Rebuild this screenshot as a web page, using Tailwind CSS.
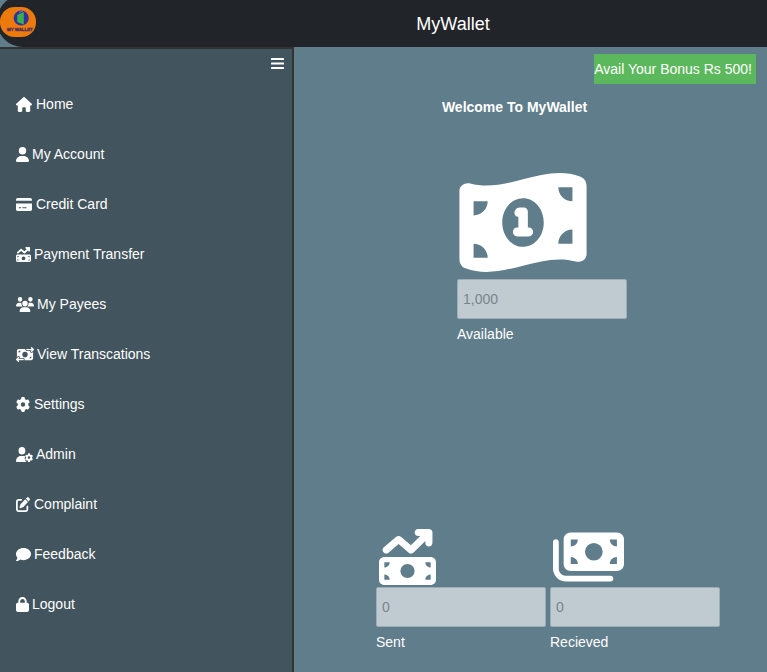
<!DOCTYPE html>
<html lang="en">
<head>
<meta charset="utf-8">
<meta name="viewport" content="width=device-width, initial-scale=1">
<title>MyWallet</title>
<script src="https://cdn.jsdelivr.net/npm/@tailwindcss/browser@4"></script>
</head>
<body class="flex min-h-screen flex-col overflow-x-hidden bg-[#607d8b] font-['Liberation_Sans',Arial,sans-serif] text-sm text-white">
<header class="-mt-[5px] -ml-[3px] flex h-[52px] shrink-0 items-center rounded-l-[26px] bg-[#212529] pl-[3px]">
  <a href="#" aria-label="MyWallet home" class="mt-[2px]">
    <svg class="block h-[30px] w-9" viewBox="0 0 36 30">
      <rect width="36" height="30" rx="14.500" fill="#ec7a0c"/>
      <circle cx="21.2" cy="11" r="7.600" fill="#30359a"/>
      <path d="M17.300 8 23.800 5v12.500l-6.500-2.500z" fill="#3dae50"/>
      <path d="M19 5.500l4-1.500" stroke="#7d86d8" stroke-width=".8"/>
      <text x="7" y="24" font-family="Liberation Sans, sans-serif" font-size="4.400" font-weight="bold" fill="#4a2a60" stroke="#4a2a60" stroke-width=".3">MY WALLET</text>
    </svg>
  </a>
  <h1 class="mt-[5px] flex-1 pl-[103px] text-center text-lg">MyWallet</h1>
</header>
<div class="flex flex-1">
  <aside class="w-[294px] shrink-0 border-t-2 border-r-2 border-[#333] bg-[#42545d]">
    <div class="flex h-[30px] justify-end pt-[8px] pr-[8px]">
      <button type="button" aria-label="Toggle menu" class="h-[14px] w-[13px]">
        <svg class="block h-[14px] w-[13px]" viewBox="0 0 13 14" fill="#fff"><rect y="1" width="13" height="2" rx=".5"/><rect y="5.500" width="13" height="2" rx=".5"/><rect y="10" width="13" height="2" rx=".5"/></svg>
      </button>
    </div>
    <nav>
      <ul>
        <li><a href="#" class="flex h-[50px] items-center gap-1 pl-4"><svg class="h-[15px] w-[16px]" preserveAspectRatio="none" viewBox="0 0 576 512" fill="currentColor"><path d="M575.800 255.500c0 18-15 32.100-32 32.100h-32l.7 160.200c0 2.700-.2 5.400-.5 8.100V472c0 22.100-17.900 40-40 40H392c-22.100 0-40-17.900-40-40V384c0-17.700-14.300-32-32-32H256c-17.700 0-32 14.300-32 32v88c0 22.100-17.900 40-40 40H104c-22.100 0-40-17.900-40-40V287.600H32c-18 0-32-14-32-32.100c0-9 3-17 10-24L266.400 8c7-7 15-8 22-8s15 2 21 7L564.800 231.500c8 7 12 15 11 24z"/></svg>Home</a></li>
        <li><a href="#" class="flex h-[50px] items-center gap-[3px] pl-4"><svg class="h-[15px] w-[13px]" viewBox="0 0 448 512" fill="currentColor"><path d="M224 256A128 128 0 1 0 224 0a128 128 0 1 0 0 256zm-45.700 48C79.800 304 0 383.800 0 482.300C0 498.700 13.300 512 29.700 512H418.300c16.400 0 29.700-13.300 29.700-29.700C448 383.800 368.200 304 269.700 304H178.300z"/></svg>My Account</a></li>
        <li><a href="#" class="flex h-[50px] items-center gap-1 pl-4"><svg class="h-[15px] w-[16px]" preserveAspectRatio="none" viewBox="0 0 576 512" fill="currentColor"><path d="M64 32C28.700 32 0 60.700 0 96v32H576V96c0-35.300-28.700-64-64-64H64zM576 224H0V416c0 35.300 28.700 64 64 64H512c35.300 0 64-28.700 64-64V224zM112 352h64c8.800 0 16 7.200 16 16s-7.200 16-16 16H112c-8.800 0-16-7.200-16-16s7.200-16 16-16zm112 16c0-8.800 7.200-16 16-16H368c8.800 0 16 7.200 16 16s-7.200 16-16 16H240c-8.800 0-16-7.200-16-16z"/></svg>Credit Card</a></li>
        <li><a href="#" class="flex h-[50px] items-center gap-[3px] pl-4"><svg class="h-[15px] w-[15px]" viewBox="0 0 512 512" fill="currentColor"><path id="trend" d="M470.700 9.400c3 3.100 5.300 6.600 6.900 10.300s2.400 7.800 2.400 12.200v96c0 17.700-14.300 32-32 32s-32-14.300-32-32V109.300L310.600 214.600c-11.800 11.800-30.800 12.600-43.500 1.700L176 138.100 84.800 216.300c-13.400 11.500-33.600 9.900-45.100-3.500s-9.900-33.600 3.500-45.100l112-96c12-10.300 29.700-10.300 41.700 0l89.500 76.700L370.700 64H352c-17.700 0-32-14.300-32-32s14.300-32 32-32h96c8.800 0 16.800 3.600 22.600 9.300zM0 304c0-26.500 21.500-48 48-48H464c26.500 0 48 21.500 48 48V464c0 26.500-21.500 48-48 48H48c-26.500 0-48-21.500-48-48V304zM48 416v48H96c0-26.500-21.500-48-48-48zM96 304H48v48c26.500 0 48-21.500 48-48zM464 416c-26.500 0-48 21.500-48 48h48V416zM416 304c0 26.500 21.500 48 48 48V304H416zm-96 80a64 64 0 1 0 -128 0 64 64 0 1 0 128 0z"/></svg>Payment Transfer</a></li>
        <li><a href="#" class="flex h-[50px] items-center gap-[3px] pl-4"><svg class="h-[15px] w-[18px]" preserveAspectRatio="none" viewBox="0 0 640 512" fill="currentColor"><path d="M144 0a80 80 0 1 1 0 160A80 80 0 1 1 144 0zM512 0a80 80 0 1 1 0 160A80 80 0 1 1 512 0zM0 298.700C0 239.800 47.800 192 106.700 192h42.700c15.900 0 31 3.500 44.600 9.700c-1.300 7.200-1.900 14.700-1.900 22.300c0 38.200 16.800 72.500 43.300 96H21.300C9.600 320 0 310.400 0 298.700zM405.300 320c26.600-23.500 42.600-57.800 42.600-96c0-7.600-.7-15-1.900-22.300c13.600-6.300 28.700-9.700 44.600-9.700h42.700C592.200 192 640 239.800 640 298.700c0 11.800-9.600 21.300-21.300 21.300H405.300zM224 224a96 96 0 1 1 192 0 96 96 0 1 1 -192 0zM128 485.300C128 411.700 187.700 352 261.300 352H378.700C452.300 352 512 411.700 512 485.300c0 14.700-11.900 26.700-26.700 26.700H154.700c-14.700 0-26.700-11.900-26.700-26.700z"/></svg>My Payees</a></li>
        <li><a href="#" class="flex h-[50px] items-center gap-[3px] pl-4"><svg class="h-[15px] w-[18px]" preserveAspectRatio="none" viewBox="0 0 640 512" fill="currentColor"><path d="M535 41c-9.400-9.400-9.400-24.600 0-33.900s24.600-9.400 33.900 0l64 64c4.500 4.500 7 10.600 7 17s-2.500 12.500-7 17l-64 64c-9.400 9.400-24.600 9.400-33.900 0s-9.400-24.600 0-33.900l23-23L384 112c-13.300 0-24-10.700-24-24s10.700-24 24-24l174.100 0L535 41zM105 377l-23 23L256 400c13.300 0 24 10.700 24 24s-10.700 24-24 24L81.900 448l23 23c9.400 9.400 9.400 24.600 0 33.900s-24.600 9.400-33.900 0L7 441c-4.500-4.500-7-10.600-7-17s2.500-12.500 7-17l64-64c9.400-9.400 24.600-9.400 33.900 0s9.400 24.600 0 33.900zM96 64H337.900c-3.700 7.200-5.900 15.300-5.900 24c0 28.700 23.300 52 52 52l117.400 0c-4 17 .6 35.500 13.800 48.800c20.300 20.300 53.200 20.300 73.500 0L608 169.500V384c0 35.300-28.700 64-64 64H302.100c3.700-7.200 5.900-15.300 5.900-24c0-28.700-23.300-52-52-52l-117.400 0c4-17-.6-35.500-13.800-48.800c-20.300-20.300-53.200-20.300-73.500 0L32 342.500V128c0-35.300 28.700-64 64-64zm64 64H96v64c35.300 0 64-28.700 64-64zM544 320c-35.300 0-64 28.700-64 64h64V320zM320 352a96 96 0 1 0 0-192 96 96 0 1 0 0 192z"/></svg>View Transcations</a></li>
        <li><a href="#" class="flex h-[50px] items-center gap-1 pl-4"><svg class="h-[15px] w-[14px]" preserveAspectRatio="none" viewBox="0 0 512 512" fill="currentColor"><path id="gear" d="M495.900 166.600c3.200 8.700 .5 18.400-6.400 24.600l-43.300 39.400c1.100 8.300 1.700 16.800 1.700 25.400s-.6 17.100-1.700 25.400l43.300 39.400c6.900 6.200 9.600 15.900 6.400 24.600c-4.400 11.900-9.700 23.300-15.800 34.300l-4.700 8.100c-6.600 11-14 21.400-22.100 31.200c-5.900 7.200-15.700 9.600-24.500 6.800l-55.700-17.700c-13.400 10.300-28.200 18.900-44 25.400l-12.500 57.100c-2 9.100-9 16.300-18.200 17.800c-13.800 2.300-28 3.500-42.500 3.500s-28.700-1.200-42.500-3.500c-9.200-1.500-16.200-8.700-18.200-17.800l-12.500-57.100c-15.800-6.500-30.600-15.100-44-25.400L83.100 425.900c-8.800 2.800-18.600 .3-24.500-6.800c-8.100-9.800-15.500-20.200-22.100-31.200l-4.700-8.100c-6.100-11-11.400-22.400-15.800-34.300c-3.200-8.700-.5-18.400 6.400-24.600l43.300-39.400C64.600 273.100 64 264.600 64 256s.6-17.100 1.700-25.400L22.400 191.200c-6.900-6.200-9.600-15.900-6.400-24.600c4.400-11.900 9.700-23.300 15.800-34.300l4.700-8.100c6.600-11 14-21.400 22.100-31.200c5.900-7.200 15.700-9.600 24.500-6.800l55.700 17.700c13.400-10.300 28.200-18.900 44-25.400l12.500-57.100c2-9.100 9-16.300 18.200-17.800C227.300 1.200 241.500 0 256 0s28.700 1.200 42.500 3.500c9.200 1.500 16.200 8.700 18.200 17.800l12.500 57.100c15.800 6.500 30.600 15.100 44 25.400l55.700-17.700c8.800-2.800 18.600-.3 24.500 6.800c8.100 9.800 15.500 20.200 22.100 31.200l4.700 8.100c6.100 11 11.400 22.400 15.800 34.300zM256 336a80 80 0 1 0 0-160 80 80 0 1 0 0 160z"/></svg>Settings</a></li>
        <li><a href="#" class="flex h-[50px] items-center gap-[3px] pl-4"><svg class="h-[15px] w-[17px]" preserveAspectRatio="none" viewBox="0 0 640 512" fill="currentColor"><path d="M224 256A128 128 0 1 0 224 0a128 128 0 1 0 0 256zm-45.700 48C79.800 304 0 383.800 0 482.300C0 498.700 13.300 512 29.700 512H400c-50-30-72-80-72-136 0-25 6-48 15-66-20-4-50-6-73-6z"/><use href="#gear" transform="translate(340 212) scale(.586)"/></svg>Admin</a></li>
        <li><a href="#" class="flex h-[50px] items-center gap-1 pl-4"><svg class="h-[15px] w-[14px]" preserveAspectRatio="none" viewBox="0 0 512 512" fill="currentColor"><path d="M471.600 21.700c-21.900-21.900-57.300-21.900-79.200 0L362.300 51.700l97.900 97.900 30.100-30.100c21.900-21.900 21.900-57.300 0-79.200L471.600 21.700zm-299.200 220c-6.100 6.100-10.800 13.600-13.500 21.900l-29.600 88.800c-2.900 8.600-.6 18.100 5.800 24.600s15.900 8.700 24.600 5.800l88.800-29.600c8.200-2.700 15.700-7.400 21.900-13.500L437.700 172.300 339.700 74.300 172.400 241.700zM96 64C43 64 0 107 0 160V416c0 53 43 96 96 96H352c53 0 96-43 96-96V320c0-17.700-14.300-32-32-32s-32 14.300-32 32v96c0 17.700-14.300 32-32 32H96c-17.700 0-32-14.300-32-32V160c0-17.700 14.300-32 32-32h96c17.700 0 32-14.300 32-32s-14.300-32-32-32H96z"/></svg>Complaint</a></li>
        <li><a href="#" class="flex h-[50px] items-center gap-[3px] pl-4"><svg class="h-[15px] w-[15px]" viewBox="0 0 512 512" fill="currentColor"><path d="M512 240c0 114.900-114.600 208-256 208c-37.100 0-72.300-6.400-104.100-17.900c-11.900 8.700-31.300 20.600-54.300 30.600C73.600 471.100 44.700 480 16 480c-6.500 0-12.300-3.900-14.800-9.900c-2.500-6-1.100-12.800 3.400-17.400c1.100-1.200 4.400-4.800 6.500-7.400c4.100-5 9.600-12.400 15.200-21.600c10-16.600 19.500-38.400 21.400-62.900C17.700 326.800 0 285.100 0 240C0 125.100 114.600 32 256 32s256 93.100 256 208z"/></svg>Feedback</a></li>
        <li><a href="#" class="flex h-[50px] items-center gap-[3px] pl-4"><svg class="h-[15px] w-[13px]" viewBox="0 0 448 512" fill="currentColor"><path d="M144 144v48H304V144c0-44.200-35.800-80-80-80s-80 35.800-80 80zM80 192V144C80 64.500 144.500 0 224 0s144 64.500 144 144v48h16c35.300 0 64 28.700 64 64V448c0 35.300-28.700 64-64 64H64c-35.300 0-64-28.700-64-64V256c0-35.300 28.700-64 64-64H80z"/></svg>Logout</a></li>
      </ul>
    </nav>
  </aside>
  <main class="flex min-w-0 flex-1 flex-col items-center pt-[7px]">
    <button type="button" class="mr-[11px] h-[30px] self-end bg-[#5cb85c] pr-1 text-left">Avail Your Bonus Rs 500!</button>
    <h2 class="mt-[13px] pr-8 leading-5 font-bold">Welcome To MyWallet</h2>
    <section class="mt-[49px] ml-[23px] flex w-[170px] flex-col">
      <svg class="ml-[2px] h-[113px] w-[128px]" viewBox="0 0 576 512" fill="#fff"><path fill-rule="evenodd" d="M0 112.500V422.300c0 18 10.100 35 27 41.300c87 32.500 174 10.300 261-11.900c79.800-20.300 159.600-40.700 239.300-18.900c23 6.300 48.700-9.500 48.700-33.400V89.700c0-18-10.100-35-27-41.300C462 15.900 375 38.100 288 60.300C208.200 80.600 128.400 100.900 48.700 79.100C25.600 72.800 0 88.600 0 112.500zM382 256c0 61.900-42 110-94 110s-94-48.100-94-110 42-110 94-110 94 48.100 94 110zM64 352c35.300 0 64 28.700 64 64H64V352zM64 224V160h64c0 35.300-28.700 64-64 64zM512 288v64H448c0-35.300 28.700-64 64-64zM448 96h64v64c-35.300 0-64-28.700-64-64z"/><path d="M272 188h20c10 0 18 8 18 18v73h4c11 0 20 9 20 20s-9 20-20 20h-52c-11 0-20-9-20-20s9-20 20-20h5v-49c-11 1-18-8-18-18s10-24 23-24z"/></svg>
      <input id="available" type="text" value="1,000" disabled class="h-10 w-full rounded-xs border border-[#9eaeb7] bg-[#c0cbd1] px-[5px] text-[#78858b]">
      <label for="available" class="mt-[5px] leading-5">Available</label>
    </section>
    <div class="mt-[185px] ml-[35px] flex gap-1">
      <section class="flex w-[170px] flex-col">
        <svg class="ml-[3px] h-[56px] w-[57px]" viewBox="0 0 512 512" preserveAspectRatio="none" fill="#fff"><use href="#trend"/></svg>
        <input id="sent" type="text" value="0" disabled class="mt-[2px] h-10 w-full rounded-xs border border-[#9eaeb7] bg-[#c0cbd1] px-[5px] text-[#78858b]">
        <label for="sent" class="mt-[5px] leading-5">Sent</label>
      </section>
      <section class="flex w-[170px] flex-col">
        <svg class="ml-[3px] h-[56px] w-[71px]" viewBox="0 0 640 512" preserveAspectRatio="none" fill="#fff"><path fill-rule="evenodd" d="M96 96v224c0 35.300 28.700 64 64 64h416c35.300 0 64-28.700 64-64V96c0-35.300-28.700-64-64-64H160c-35.300 0-64 28.700-64 64zm64 160c35.300 0 64 28.700 64 64h-64v-64zM224 96c0 35.300-28.700 64-64 64V96h64zM576 256v64h-64c0-35.300 28.700-64 64-64zM512 96h64v64c-35.300 0-64-28.700-64-64zM288 208a80 80 0 1 1 160 0 80 80 0 1 1-160 0z"/><path d="M52 120c0-14.400-11.600-26-26-26S0 105.600 0 120V360c0 66.300 53.700 120 120 120H518c14.400 0 26-11.600 26-26s-11.600-26-26-26H120c-37.600 0-68-30.400-68-68V120z"/></svg>
        <input id="received" type="text" value="0" disabled class="mt-[2px] h-10 w-full rounded-xs border border-[#9eaeb7] bg-[#c0cbd1] px-[5px] text-[#78858b]">
        <label for="received" class="mt-[5px] leading-5">Recieved</label>
      </section>
    </div>
  </main>
</div>
</body>
</html>
